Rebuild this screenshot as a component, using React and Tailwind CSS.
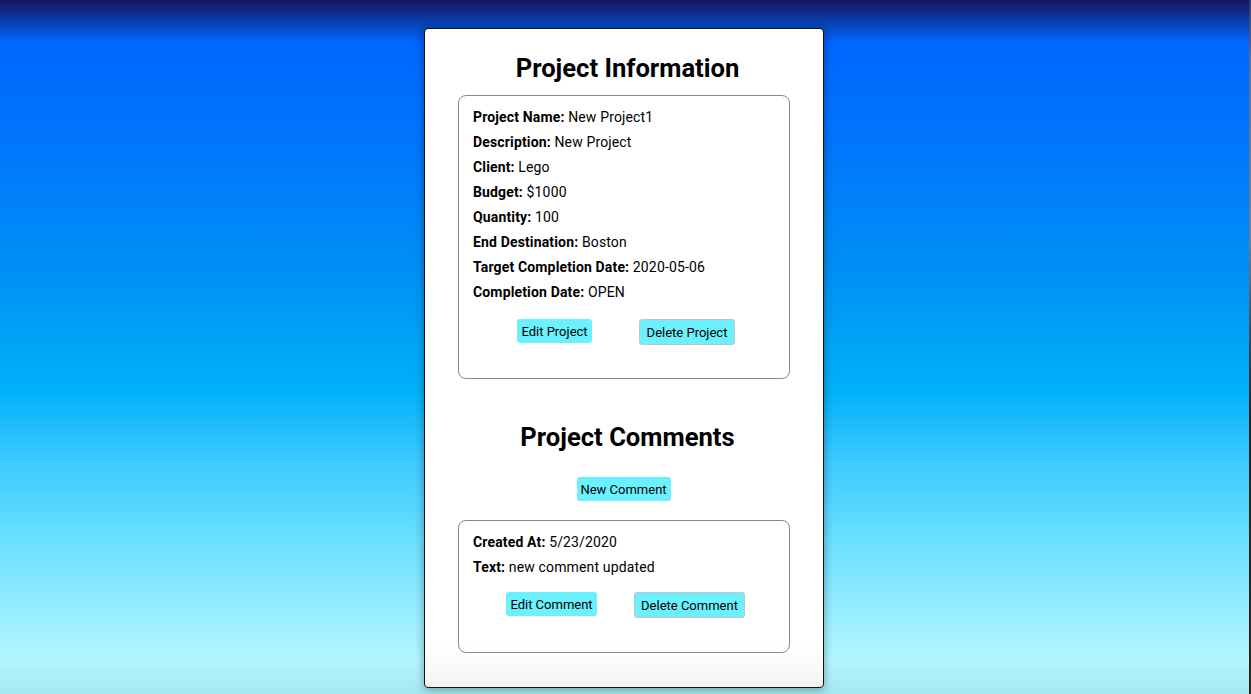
import React from "react";

const Line = ({ label, value }) => (
  <div className="h-[25px] leading-[25px] text-[14px] text-black tracking-[0.15px]">
    <span className="font-bold">{label}</span> {value}
  </div>
);

const Btn = ({ children, w, bordered }) => (
  <button
    className={
      "h-[24px] rounded-[3px] bg-[#6af1fd] text-[13px] text-black leading-none flex items-center justify-center " +
      (bordered ? "border border-[#c4c4c4] h-[26px] " : "") +
      w
    }
    style={{ fontFamily: "Roboto, sans-serif" }}
  >
    {children}
  </button>
);

export default function App() {
  return (
    <div
      className="w-[1251px] h-[694px] flex overflow-hidden"
      style={{ fontFamily: "Roboto, 'Noto Sans', sans-serif" }}
    >
      <div className="flex-1 h-full bg-[linear-gradient(to_bottom,#15155e_0px,#0a3fb0_22px,#0066ff_42px,#0078fb_150px,#0092f6_280px,#00b1f9_390px,#3ccaff_460px,#6adfff_540px,#95ecff_610px,#b2f6ff_660px,#a4e9f2_694px)] flex justify-center pt-[28px]">
        <div className="mr-[1px] w-[400px] h-[660px] border border-[#111] rounded-[4px] bg-[linear-gradient(to_bottom,#ffffff_0px,#ffffff_615px,#f3f3f3_660px)] shadow-[0_2px_10px_rgba(0,0,0,0.35)] flex flex-col items-center pt-[23px]">
          <h1 className="pl-[7px] text-[25.6px] font-bold leading-[32px] text-black">Project Information</h1>
          <div className="mt-[11px] w-[332px] h-[284px] border border-[#888] rounded-[8px] pl-[14px] pt-[9px]">
            <Line label="Project Name:" value="New Project1" />
            <Line label="Description:" value="New Project" />
            <Line label="Client:" value="Lego" />
            <Line label="Budget:" value="$1000" />
            <Line label="Quantity:" value="100" />
            <Line label="End Destination:" value="Boston" />
            <Line label="Target Completion Date:" value="2020-05-06" />
            <Line label="Completion Date:" value="OPEN" />
            <div className="flex items-start mt-[14px] pl-[44px] gap-[47px]">
              <Btn w="w-[75px]">Edit Project</Btn>
              <Btn w="w-[96px]" bordered>Delete Project</Btn>
            </div>
          </div>
          <h1 className="pl-[7px] mt-[42px] text-[25.6px] font-bold leading-[32px] text-black">Project Comments</h1>
          <div className="mt-[24px] ml-[-1px]">
            <Btn w="w-[94px]">New Comment</Btn>
          </div>
          <div className="mt-[19px] w-[332px] h-[133px] border border-[#888] rounded-[8px] pl-[14px] pt-[9px]">
            <Line label="Created At:" value="5/23/2020" />
            <Line label="Text:" value="new comment updated" />
            <div className="flex items-start mt-[12px] pl-[33px] gap-[37px]">
              <Btn w="w-[91px]">Edit Comment</Btn>
              <Btn w="w-[111px]" bordered>Delete Comment</Btn>
            </div>
          </div>
        </div>
      </div>
      <div className="w-[2px] h-full bg-[linear-gradient(to_bottom,#2a3a7a_0px,#5a6f95_60px,#6d7f98_240px,#3a3a48_360px,#2a2420_420px,#2a2420_694px)]" />
    </div>
  );
}
